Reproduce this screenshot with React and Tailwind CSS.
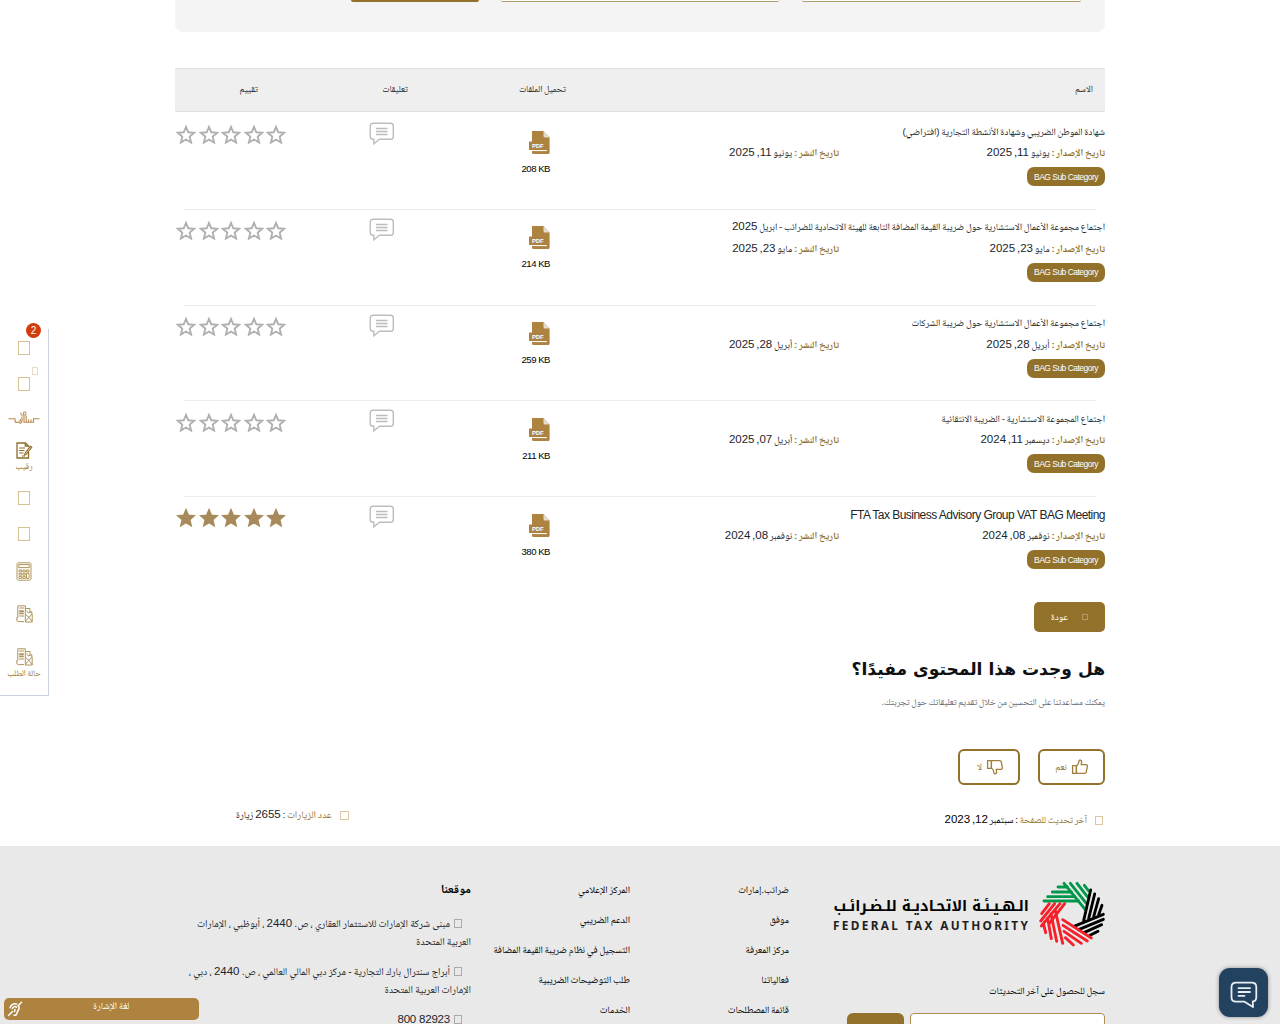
const rows = [
  { title: 'شهادة الموطن الضريبي وشهادة الأنشطة التجارية (افتراضي)', issued: 'يونيو 11, 2025', published: 'يونيو 11, 2025', size: '208 KB' },
  { title: 'اجتماع مجموعة الأعمال الاستشارية حول ضريبة القيمة المضافة التابعة للهيئة الاتحادية للضرائب - ابريل 2025', issued: 'مايو 23, 2025', published: 'مايو 23, 2025', size: '214 KB' },
  { title: 'اجتماع مجموعة الأعمال الاستشارية حول ضريبة الشركات', issued: 'أبريل 28, 2025', published: 'أبريل 28, 2025', size: '259 KB' },
  { title: 'اجتماع المجموعة الاستشارية - الضريبة الانتقائية', issued: 'ديسمبر 11, 2024', published: 'أبريل 07, 2025', size: '211 KB' },
  { title: 'FTA Tax Business Advisory Group VAT BAG Meeting', latin: true, issued: 'نوفمبر 08, 2024', published: 'نوفمبر 08, 2024', size: '380 KB', rated: true },
];

// Sets digit runs a little larger than the Arabic around them.
const Ar = ({ children }) =>
  children.split(/(\d+,?)/).map((part, i) =>
    i % 2 ? <span key={i} className="text-[11.5px] leading-none tracking-[-0.3px]">{part}</span> : part
  );

const Box = ({ className = '' }) => <span className={`inline-block shrink-0 border ${className}`} />;

const Star = ({ filled }) => (
  <svg viewBox="0 0 20 20" className="h-5 w-5">
    <path
      d="M10 1.9 L12.3 7.3 L18.2 7.8 L13.7 11.6 L15.1 17.6 L10 14.5 L4.9 17.6 L6.3 11.6 L1.8 7.8 L7.7 7.3 Z"
      fill={filled ? '#a68a5b' : '#fff'}
      stroke={filled ? '#a68a5b' : '#b0b0b0'}
      strokeWidth={filled ? 1.6 : 1.9}
    />
  </svg>
);

const Comment = () => (
  <svg viewBox="0 0 26 24" className="h-6 w-[26px]" fill="none" stroke="#bdbdbd">
    <path d="M4 1.2 H21.5 Q24.3 1.2 24.3 4 V14.5 Q24.3 17.3 21.5 17.3 H10.5 L4.8 21.8 V17.3 H4 Q1.2 17.3 1.2 14.5 V4 Q1.2 1.2 4 1.2 Z" strokeWidth="1.4" />
    <path d="M7 6.5 H18.5 M7 9.5 H18.5 M7 12.5 H18.5" strokeWidth="1.5" />
  </svg>
);

const Pdf = () => (
  <svg viewBox="0 0 21 23" className="h-[23px] w-[21px]">
    <path d="M3 0 H14.5 L20.6 6.5 V21.5 Q20.6 23 19 23 H4.6 Q3 23 3 21.5 Z" fill="#ad833f" />
    <path d="M14.5 0 L20.6 6.5 H16 Q14.5 6.5 14.5 5 Z" fill="#e4dccb" />
    <rect x="0" y="10.5" width="17" height="8.5" rx="0.6" fill="#ad833f" />
    <path d="M3 19.6 H18" stroke="#fff" strokeWidth="1" />
    <text x="2.9" y="17" direction="ltr" letterSpacing="0" fontSize="5.6" fontWeight="700" fontFamily="Liberation Sans" fill="#fff" textLength="11.6" lengthAdjust="spacingAndGlyphs">PDF</text>
  </svg>
);

const Thumb = ({ down }) => (
  <svg viewBox="0 0 18 16" className={`h-4 w-[18px] ${down ? '-scale-y-100' : ''}`} fill="none" stroke="#a07f3c" strokeWidth="1.3" strokeLinejoin="round">
    <path d="M1.6 6.6 H5.4 V14.4 H1.6 Z" />
    <path d="M5.4 7 C7.6 6 7.6 3.8 8 1.8 C8.4 0.6 10.8 1 10.6 3.2 L10.2 5.6 H15 Q16.6 5.8 16.3 7.4 L15.3 13 Q15 14.3 13.8 14.4 H5.4 Z" />
  </svg>
);

const Emblem = () => (
  <svg viewBox="0 0 228 228" className="h-[76px] w-[76px]" fill="none" strokeWidth="8.6" strokeLinecap="round">
    <g stroke="#00974a">
      <path d="M30 75 H134 M41 62 H122 M55 48 H112 M72 33 H100" />
      <path d="M90 22 L154 101 M109 22 L157 82 M129 22 L160 62 M151 28 L164 45" />
    </g>
    <g stroke="#000">
      <path d="M170 42 L149 134 M182 54 L164 128 M194 68 L179 122 M204 88 L194 116" />
      <path d="M208 115 L120 151 M208 130 L134 161 M203 146 L150 170 M192 166 L168 178" />
    </g>
    <g stroke="#f5202a">
      <path d="M86 131 L172 186 M87 148 L160 195 M90 166 L142 202 M94 185 L118 207" />
      <path d="M64 104 L86 202 M51 114 L68 196 M41 127 L52 188 M29 146 L35 170" />
      <path d="M92 83 L46 142 M78 83 L22 150 M62 83 L20 135 M46 83 L23 113" />
    </g>
  </svg>
);

const DocEdit = () => (
  <svg viewBox="0 0 17 17" className="h-[17px] w-[17px]" fill="none" stroke="#8d6d28" strokeWidth="1.3">
    <path d="M12.5 9.5 V16 H1 V1 H9.5 L12.5 4 V5 M9.3 1 V4.2 H12.5" />
    <path d="M3.2 6 H9 M3.2 8.5 H8.5 M3.2 11 H7.5 M6 14 H9" strokeWidth="1" />
    <path d="M15.8 5.2 L10 12.5 L8.6 13 L8.9 11.4 L14.3 4.3 Z" strokeWidth="1.1" />
  </svg>
);

const Calculator = () => (
  <svg viewBox="0 0 16 19" className="h-[19px] w-4" fill="none" stroke="#b2975b" strokeWidth="1">
    <rect x="1" y="0.8" width="14" height="17.4" rx="1.5" />
    <rect x="2.8" y="2.6" width="10.4" height="3" />
    <path d="M3 8 H5.6 V10 H3 Z M6.8 8 H9.3 V10 H6.8 Z M10.5 8 H13 V10 H10.5 Z M3 11.4 H5.6 V13.2 H3 Z M6.8 11.4 H9.3 V13.2 H6.8 Z M10.5 11.4 H13 V16.4 H10.5 Z M3 14.6 H5.6 V16.4 H3 Z M6.8 14.6 H9.3 V16.4 H6.8 Z" />
  </svg>
);

const Request = () => (
  <svg viewBox="0 0 17 18" className="h-[18px] w-[17px]" fill="none" stroke="#b0935a" strokeWidth="1">
    <path d="M1.8 12.5 V0.8 H9.3 V15.8 M1.8 12.5 H0.8 V15 Q0.8 16.6 2.5 16.6 H8" />
    <path d="M3.2 3 H8 M3.2 11 H8" />
    <path d="M3.2 6.2 H7.8 M3.2 8.4 H7.8" strokeWidth="1.8" />
    <path d="M9.3 3.5 H14 V7.5 M10.5 5.5 L12.5 8 L15.8 6.5 V9 M9.5 9.5 L12.8 12.2 L16.2 9.2 V17 H9 L12.8 12.2 M16.2 16.5 L12.8 12.2" />
  </svg>
);

const Nabd = () => (
  <svg viewBox="0 0 32 16" className="h-4 w-8" fill="none" stroke="#b88a4c" strokeWidth="1.1">
    <path d="M0.5 8.7 H7 V10.5 Q7 12.5 9 12.5 H9.5 Q12.5 12.5 12.5 9.5 V9 M14 6.5 V10 Q14 13.5 11.5 13.5 M16 5.5 V12.3 H18.2 V5.5 M18.2 12.3 H20.5 V9.5 M20.5 12.3 H23 V9.5 M23 12.3 H25.5 V8.7 H31.5" />
    <path d="M13 2.5 V5 H17.8 V2 H15.6 V5" strokeWidth="0.9" />
  </svg>
);

const ChatIcon = () => (
  <svg viewBox="0 0 28 28" className="h-7 w-7" fill="none" stroke="#e9eef2" strokeWidth="1.8" strokeLinecap="round" strokeLinejoin="round">
    <path d="M6 1.6 H21.8 Q26.3 1.6 26.3 6.1 V16 Q26.3 20.5 22.8 20.5 L23 26 L14.5 20.7 H6 Q1.5 20.7 1.5 16.2 V6.1 Q1.5 1.6 6 1.6 Z" />
    <path d="M8.5 7.2 H20 M8.5 11 H20 M8.5 14.8 H14.5" />
  </svg>
);

const EarIcon = () => (
  <svg viewBox="0 0 16 16" className="h-4 w-4" fill="none" stroke="#fff" strokeWidth="1.5" strokeLinecap="round">
    <path d="M1.5 14.5 L5.5 10.5 M11 5 L14.5 1.2 M3 6.8 C4 3.2 7.5 2 9.8 3.2 M5.4 7.6 C6.2 5.4 8.4 5 9.4 6.2 M12 5.6 C12.8 8.6 10.6 9.4 10.2 11.4 C9.8 13.8 8.6 14.6 7 14.2 M8 8.5 L7.5 10.5" />
  </svg>
);

const Meta = ({ label, value, className = '' }) => (
  <div className={`h-[18px] whitespace-nowrap ${className}`}>
    <b className="text-[9.7px] text-[#92722a]">{label} :</b> <span><Ar>{value}</Ar></span>
  </div>
);

const links1 = ['ضرائب.إمارات', 'موفق', 'مركز المعرفة', 'فعالياتنا', 'قائمة المصطلحات'];
const links2 = ['المركز الإعلامي', 'الدعم الضريبي', 'التسجيل في نظام ضريبة القيمة المضافة', 'طلب التوضيحات الضريبية', 'الخدمات'];

const Links = ({ items, className }) => (
  <ul className={`pt-[29px] leading-[30px] whitespace-nowrap text-black ${className}`}>
    {items.map((l) => <li key={l}>{l}</li>)}
  </ul>
);

export default function App() {
  return (
    <div dir="rtl" className="relative h-[1024px] w-full overflow-hidden bg-white font-['Liberation_Sans','Noto_Naskh_Arabic',sans-serif] text-[9.9px] leading-[18px] tracking-normal text-[#212529] [word-spacing:-1px]">
      <main className="mx-auto h-[846px] w-[930px]">
        <div className="flex h-8 items-start gap-[23px] rounded-b-lg bg-[#f4f4f4] pr-6">
          <div className="h-[2px] w-[279px] rounded-b-sm border-b border-[#b09a66] bg-white" />
          <div className="-ml-px h-[2px] w-[278px] rounded-b-sm border-b border-[#b09a66] bg-white" />
          <div className="h-[2px] w-[128px] rounded-b bg-[#92722a]" />
        </div>

        <div className="mt-9 flex h-11 items-center border-y border-[#e0e0e0] bg-[#efefef] pb-[2px] text-[9.3px]">
          <div className="w-[515px] pr-3">الاسم</div>
          <div className="w-[100px] pr-[24px] whitespace-nowrap">تحميل الملفات</div>
          <div className="w-[190px] pr-[82px]">تعليقات</div>
          <div className="w-[125px] pr-[42px]">تقييم</div>
        </div>

        <div className="pt-[2px]">
          {rows.map((r, i) => (
            <div key={r.title} className="flex h-[95.75px] flex-col">
              <div className="flex grow">
                <div className="w-[515px] pt-[8.5px]">
                  <div className={`h-[18px] whitespace-nowrap ${r.latin ? 'text-[12px] tracking-[-0.53px] [word-spacing:0]' : 'text-[9.75px]'}`}>{r.latin ? r.title : <Ar>{r.title}</Ar>}</div>
                  <div className="mt-[3.5px] flex">
                    <Meta className="w-[266px]" label="تاريخ الإصدار" value={r.issued} />
                    <Meta label="تاريخ النشر" value={r.published} />
                  </div>
                  <div className="mt-[5px] flex h-[19px] w-[78px] items-center justify-center rounded-[7px] bg-[#92722a] text-[8.5px] tracking-[-0.53px] whitespace-nowrap text-white [word-spacing:0]">BAG Sub Category</div>
                </div>
                <div className="flex w-[100px] flex-col items-start pt-[16.5px] pr-10">
                  <Pdf />
                  <div dir="ltr" className="mt-[6px] text-[9.6px] tracking-[-0.5px] text-black [word-spacing:0]">{r.size}</div>
                </div>
                <div className="w-[190px] pt-[8px] pr-[95px]"><Comment /></div>
                <div className="flex w-[125px] gap-[2.5px] pt-[11.25px] pr-[14px]">
                  {[0, 1, 2, 3, 4].map((s) => <Star key={s} filled={r.rated} />)}
                </div>
              </div>
              {i < 4 && <div className="mx-[9px] border-b border-[#ececec]" />}
            </div>
          ))}
        </div>

        <button className="mt-[9.5px] flex h-[30px] w-[71px] items-center rounded-[5px] bg-[#92722a] pr-[17px] pb-px text-[9.6px] text-white">
          <Box className="ml-[14px] h-[6px] w-[6px] border-[#b29b67]" />عودة
        </button>
        <h2 className="mt-[22px] font-['DejaVu_Sans'] text-[17.1px] leading-[30px] font-bold tracking-normal text-[#0e0f12] [word-spacing:0]">هل وجدت هذا المحتوى مفيدًا؟</h2>
        <p className="mt-[9px] text-[9.2px] text-[#5f646d]">يمكنك مساعدتنا على التحسين من خلال تقديم تعليقاتك حول تجربتك.</p>
        <div className="mt-[38px] flex gap-[18px] text-[9.6px] text-[#92722a]">
          <div className="flex h-9 w-[67px] items-center gap-1 rounded-[6px] border-2 border-[#92722a] pr-[14px]"><Thumb />نعم</div>
          <div className="flex h-9 w-[62px] items-center gap-1 rounded-[6px] border-2 border-[#92722a] pr-[14px]"><Thumb down />لا</div>
        </div>
        <div className="flex pt-[17px] text-black">
          <div className="flex w-[756px] items-center pt-[9px]">
            <Box className="mr-[2px] ml-[8px] h-[9px] w-[8px] border-[#dcc9a2]" />
            <span className="text-[9.6px] text-[#92722a]">آخر تحديث للصفحة</span><span>&nbsp;: <Ar>سبتمبر 12, 2023</Ar></span>
          </div>
          <div className="mt-[4px] flex h-[18px] items-center whitespace-nowrap text-[#212529]">
            <Box className="ml-[8px] h-[9px] w-[9px] border-[#dcc9a2]" />
            <span className="text-[10.2px] text-[#92722a]">عدد الزيارات</span><span>&nbsp;: <Ar>2655 زيارة</Ar></span>
          </div>
        </div>
      </main>

      <footer className="h-[178px] bg-[#e9e9e9]">
        <div className="mx-auto flex w-[930px]">
          <div className="w-[316px]">
            <div className="flex items-center gap-[5px] pt-[30px]">
              <div className="-mr-[5px]"><Emblem /></div>
              <div className="w-[196px] text-black [word-spacing:0]">
                <div className="flex h-[20px] items-center font-['Noto_Kufi_Arabic'] text-[14.7px] font-bold whitespace-nowrap">الـهـيـئـة الاتحـاديـة للـضـرائـب</div>
                <div dir="ltr" className="mt-px font-['Noto_Sans'] text-[11.8px] leading-[16px] font-bold tracking-[2.35px] whitespace-nowrap text-[#231f20]">FEDERAL TAX AUTHORITY</div>
              </div>
            </div>
            <p className="mt-[30px] text-[9.7px] text-black">سجل للحصول على آخر التحديثات</p>
            <div className="mt-[13px] flex gap-[6px]">
              <div className="h-8 w-[195px] rounded border border-[#ad8f52] bg-white" />
              <div className="h-8 w-[57px] rounded-md bg-[#92722a]" />
            </div>
          </div>
          <Links items={links1} className="w-[159px]" />
          <Links items={links2} className="w-[159px]" />
          <div className="w-[296px] pt-[34px] text-[10.3px] [word-spacing:-0.7px]">
            <h3 className="h-[18px] text-[12.5px] font-bold text-black">موقعنا</h3>
            <p className="mt-[17px] h-9 whitespace-nowrap"><Box className="mr-[9px] ml-[4px] h-[9px] w-[8px] border-[#aaa] align-[-1px]" /><Ar>مبنى شركة الإمارات للاستثمار العقاري ، ص. 2440 ، أبوظبي ، الإمارات</Ar><br />العربية المتحدة</p>
            <p className="mt-[12px] h-9 whitespace-nowrap"><Box className="mr-[9px] ml-[4px] h-[9px] w-[8px] border-[#aaa] align-[-1px]" /><Ar>أبراج سنترال بارك التجارية - مركز دبي المالي العالمي ، ص. 2440 ، دبي ،</Ar><br />الإمارات العربية المتحدة</p>
            <p className="mt-[12px] h-[18px]"><Box className="mr-[9px] ml-[4px] h-[9px] w-[8px] border-[#aaa] align-[-1px]" /><bdi dir="ltr" className="text-[11.5px] leading-none tracking-[-0.2px] [word-spacing:0]">800 82923</bdi></p>
          </div>
        </div>
      </footer>

      <aside className="absolute top-[329px] left-0 flex h-[367px] w-[49px] flex-col items-center border-r border-b border-[#cbd4dd] bg-white text-[8.7px] leading-[12px] text-[#92722a]">
        <Box className="mt-[12px] h-[14px] w-3 border-[#d8c193]" />
        <Box className="mt-[22px] h-[14px] w-3 border-[#d8c193]" />
        <div className="mt-[19px]"><Nabd /></div>
        <div className="mt-[16px]"><DocEdit /></div>
        <span className="mt-px">رقيب</span>
        <Box className="mt-[19px] h-[14px] w-3 border-[#d8c193]" />
        <Box className="mt-[22px] h-[14px] w-3 border-[#d8c193]" />
        <div className="mt-[21px]"><Calculator /></div>
        <div className="mt-[24px]"><Request /></div>
        <div className="mt-[25px]"><Request /></div>
        <span className="mt-px whitespace-nowrap">حالة الطلب</span>
        <span className="absolute -top-[6px] left-[26px] flex h-[15px] w-[15px] items-center justify-center rounded-full bg-[#d03c0c] text-[10px] text-white">2</span>
        <Box className="absolute top-[38px] left-[32px] h-[8px] w-[6px] border-[#eadcc4]" />
      </aside>

      <div className="absolute top-[968px] left-[1219px] flex h-[49px] w-[49px] items-center justify-center rounded-[11px] bg-[#234260] pt-[4px] shadow-[0_0_4px_rgba(0,0,0,0.4)]"><ChatIcon /></div>

      <div dir="ltr" className="absolute top-[998px] left-1 flex h-[22px] w-[195px] items-center rounded-[5px] bg-[#ad833f] pl-[3px] text-[9.8px] text-white">
        <EarIcon /><span className="-mt-[6px] ml-[70px]">لغة الإشارة</span>
      </div>
    </div>
  );
}
